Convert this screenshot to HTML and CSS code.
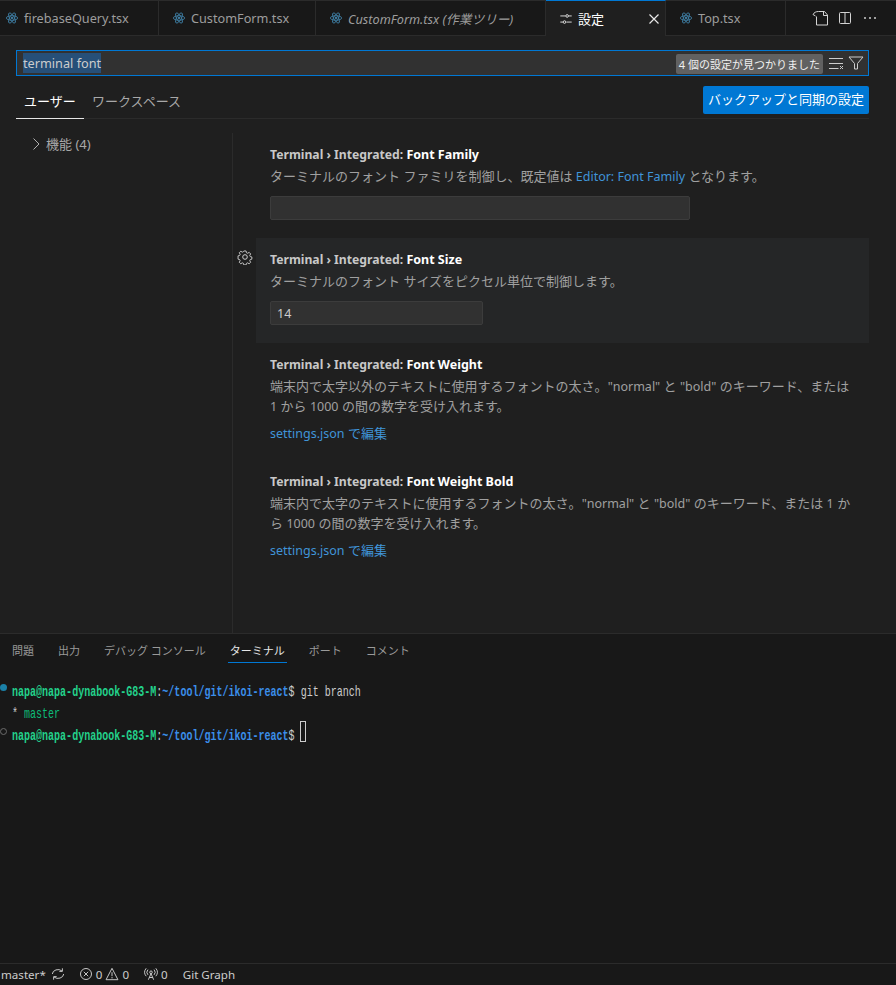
FILE: index.html
```html
<!DOCTYPE html>
<html lang="ja">
<head>
<meta charset="utf-8">
<title>設定</title>
<link rel="stylesheet" href="styles.css">
</head>
<body>
<svg class="defs" width="0" height="0" aria-hidden="true">
  <symbol id="react" viewBox="0 0 16 16">
    <g fill="none" stroke="#3f7fa6" stroke-width="1">
      <ellipse cx="8" cy="8" rx="6.5" ry="2.6"/>
      <ellipse cx="8" cy="8" rx="6.5" ry="2.6" transform="rotate(60 8 8)"/>
      <ellipse cx="8" cy="8" rx="6.5" ry="2.6" transform="rotate(120 8 8)"/>
    </g>
    <circle cx="8" cy="8" r="1.3" fill="#3f7fa6"/>
  </symbol>
</svg>
<div class="app">
  <div class="tabbar">
    <div class="tab w1"><svg class="ficon"><use href="#react"/></svg><span>firebaseQuery.tsx</span></div>
    <div class="tab w2"><svg class="ficon"><use href="#react"/></svg><span>CustomForm.tsx</span></div>
    <div class="tab w3"><svg class="ficon"><use href="#react"/></svg><span class="ital">CustomForm.tsx (作業ツリー)</span></div>
    <div class="tab w4 active">
      <svg class="ficon" viewBox="0 0 16 16" fill="none" stroke="#e0e0e0" stroke-width="1.100"><path d="M1.500 4.500h6M11 4.500h3.500M1.500 11.500h3M8.500 11.500h6"/><circle cx="9.300" cy="4.500" r="1.500"/><circle cx="6.300" cy="11.500" r="1.500"/></svg>
      <span>設定</span>
      <svg class="close" viewBox="0 0 16 16" fill="none" stroke="#e8e8e8" stroke-width="1.200"><path d="M3.500 3.500l9 9M12.500 3.500l-9 9"/></svg>
    </div>
    <div class="tab w5"><svg class="ficon"><use href="#react"/></svg><span>Top.tsx</span></div>
    <div class="tabactions">
      <svg class="act" viewBox="0 0 16 16" fill="none" stroke="#d4d4d4" stroke-width="1"><path d="M4.500 6.500v8.500h11v-10l-3-3.500h-6"/><path d="M11.500 1.500v4h4"/><path d="M1 4.500c1-2 3-3 5.500-3M1 4.500l2.500 1.500"/></svg>
      <svg class="act" viewBox="0 0 16 16" fill="none" stroke="#d4d4d4" stroke-width="1"><rect x="2.500" y="2.500" width="11" height="11" rx="1"/><path d="M8 2.500v11"/></svg>
      <svg class="act" viewBox="0 0 16 16" fill="#cccccc"><circle cx="3" cy="8" r="1"/><circle cx="8" cy="8" r="1"/><circle cx="13" cy="8" r="1"/></svg>
    </div>
  </div>

  <main class="editor">
    <div class="searchbox">
      <span class="query">terminal font</span>
      <span class="count">4 個の設定が見つかりました</span>
      <svg class="sicon" viewBox="0 0 16 16" fill="none" stroke="#cccccc" stroke-width="1"><path d="M1 3.500h14M1 8.500h14M1 13.500h9.500"/><path d="M12 11l3 3M15 11l-3 3"/></svg>
      <svg class="sicon" viewBox="0 0 16 16" fill="none" stroke="#cccccc" stroke-width="1"><path d="M1 2h14l-5.500 6.500v5.500h-3v-5.500z"/></svg>
    </div>
    <div class="scopebar">
      <div class="scope on">ユーザー</div>
      <div class="scope">ワークスペース</div>
      <button class="backup">バックアップと同期の設定</button>
    </div>
    <div class="body">
      <nav class="toc">
        <svg class="chev" viewBox="0 0 16 16" fill="none" stroke="#b0b0b0" stroke-width="1"><path d="M5.500 2.500l5.500 5.500-5.500 5.500"/></svg>
        <span>機能 (4)</span>
      </nav>
      <div class="list">
        <section class="item">
          <h3><span class="cat">Terminal › Integrated: </span>Font Family</h3>
          <p>ターミナルのフォント ファミリを制御し、既定値は <a class="la">Editor: Font Family</a> となります。</p>
          <div class="field wide"></div>
        </section>
        <section class="item hover">
          <svg class="gear" viewBox="0 0 16 16" fill="none" stroke="#cfcfcf" stroke-width="1"><circle cx="8" cy="8" r="2.300"/><path d="M6.800 1.500h2.400l.4 1.900 1.300.6 1.700-1 1.600 1.700-1 1.600.6 1.300 1.700.4v2.400l-1.700.4-.6 1.300 1 1.700-1.700 1.600-1.600-1-1.300.6-.4 1.700H6.800l-.4-1.700-1.300-.6-1.700 1-1.600-1.700 1-1.600-.6-1.300-1.700-.4V6.800l1.700-.4.600-1.300-1-1.700 1.700-1.600 1.600 1 1.300-.6z" transform="translate(.6 .6) scale(.92)"/></svg>
          <h3><span class="cat">Terminal › Integrated: </span>Font Size</h3>
          <p>ターミナルのフォント サイズをピクセル単位で制御します。</p>
          <div class="field narrow">14</div>
        </section>
        <section class="item tall">
          <h3><span class="cat">Terminal › Integrated: </span>Font Weight</h3>
          <p>端末内で太字以外のテキストに使用するフォントの太さ。<span class="la">"normal"</span> と <span class="la">"bold"</span> のキーワード、または<br><span class="la">1</span> から <span class="la">1000</span> の間の数字を受け入れます。</p>
          <a class="edit"><span class="la">settings.json</span> で編集</a>
        </section>
        <section class="item tall">
          <h3><span class="cat">Terminal › Integrated: </span>Font Weight Bold</h3>
          <p>端末内で太字のテキストに使用するフォントの太さ。<span class="la">"normal"</span> と <span class="la">"bold"</span> のキーワード、または <span class="la">1</span> か<br>ら <span class="la">1000</span> の間の数字を受け入れます。</p>
          <a class="edit"><span class="la">settings.json</span> で編集</a>
        </section>
      </div>
    </div>
  </main>

  <section class="panel">
    <div class="ptabs">
      <div class="ptab">問題</div>
      <div class="ptab">出力</div>
      <div class="ptab">デバッグ コンソール</div>
      <div class="ptab on">ターミナル</div>
      <div class="ptab">ポート</div>
      <div class="ptab">コメント</div>
    </div>
    <div class="term">
      <div class="line"><i class="deco blue"></i><div class="mono"><b class="g">napa@napa-dynabook-G83-M</b>:<b class="b">~/tool/git/ikoi-react</b>$ git branch</div></div>
      <div class="line"><div class="mono">* <span class="gm">master</span></div></div>
      <div class="line"><i class="deco hollow"></i><div class="mono"><b class="g">napa@napa-dynabook-G83-M</b>:<b class="b">~/tool/git/ikoi-react</b>$</div><i class="cursor"></i></div>
    </div>
  </section>

  <footer class="status">
    <span class="s1">master*</span>
    <svg class="st s2" viewBox="0 0 16 16" fill="none" stroke="#cccccc" stroke-width="1.100"><path d="M1.500 8a6.500 5.500 0 0 1 11-3.500M14.500 8a6.500 5.500 0 0 1-11 3.500"/><path d="M9.500 5h3.500v-3.500M6.500 11h-3.500v3.500"/></svg>
    <svg class="st s3" viewBox="0 0 16 16" fill="none" stroke="#cccccc" stroke-width="1.100"><circle cx="8" cy="8" r="6.300"/><path d="M5.500 5.500l5 5M10.500 5.500l-5 5"/></svg><span>0</span>
    <svg class="st" viewBox="0 0 16 16" fill="none" stroke="#cccccc" stroke-width="1.100"><path d="M8 1.500l6.800 13h-13.600z"/><path d="M8 6v4.500M8 11.500v1.500"/></svg><span>0</span>
    <svg class="st s4" viewBox="0 0 16 16" fill="none" stroke="#cccccc" stroke-width="1.100"><circle cx="8" cy="6" r="1.500"/><path d="M8 7.500l-3 7M8 7.500l3 7M6 12h4M4.500 3a4.500 4.500 0 0 0 0 6M11.500 3a4.500 4.500 0 0 1 0 6M2.500 1.500a7 7 0 0 0 0 9M13.500 1.500a7 7 0 0 1 0 9"/></svg><span>0</span>
    <span class="s5">Git Graph</span>
  </footer>
</div>
</body>
</html>
```
FILE: styles.css
```css
* { box-sizing: border-box; }
html, body { margin: 0; height: 100%; }
body {
  background: #1f1f1f;
  color: #cccccc;
  font-family: "Noto Sans", "Noto Sans CJK JP", sans-serif;
  font-size: 13px;
  overflow: hidden;
}
.defs { position: absolute; }
.app { width: 896px; height: 985px; display: flex; flex-direction: column; }

.tabbar {
  height: 36px;
  flex: none;
  display: flex;
  background: #181818;
  border-top: 1px solid #2b2b2b;
  border-bottom: 1px solid #2b2b2b;
}
.tab {
  display: flex;
  align-items: center;
  padding-left: 5px;
  gap: 5px;
  color: #9d9d9d;
  border-right: 1px solid #2b2b2b;
  font-size: 12.700px;
}
.w1 { width: 159px; }
.w2 { width: 157px; padding-left: 13px; }
.w3 { width: 230px; padding-left: 13px; }
.w4 { width: 120px; padding-left: 13px; }
.w5 { width: 120px; padding-left: 13px; }
.ficon { width: 14px; height: 14px; flex: none; }
.ital { font-style: italic; }
.tab.active {
  background: #1f1f1f;
  color: #ffffff;
  font-size: 13px;
  position: relative;
  margin-bottom: -1px;
  border-top: 1px solid #0078d4;
  margin-top: -1px;
  height: 36px;
}
.close { width: 16px; height: 16px; margin-left: auto; margin-right: 3px; }
.tabactions { flex: 1; display: flex; align-items: center; justify-content: flex-end; gap: 9px; padding-right: 18px; }
.act { width: 16px; height: 16px; }

.editor { flex: none; height: 597px; display: flex; flex-direction: column; padding: 14px 27px 0 16px; }
.searchbox {
  height: 26px;
  flex: none;
  display: flex;
  align-items: center;
  background: #313131;
  border: 1px solid #0078d4;
  padding: 0 6px;
  font-size: 12.700px;
}
.query { background: #264f78; color: #cccccc; line-height: 20px; }
.count {
  margin-left: auto;
  margin-top: 2px;
  height: 20px;
  background: #616161;
  color: #f0f0f0;
  font-size: 11px;
  line-height: 22px;
  padding: 0 3px;
  border-radius: 2px;
  margin-right: 3px;
}
.sicon { width: 16px; height: 16px; margin-left: 2px; }
.sicon + .sicon { margin-left: 4px; margin-right: -2px; }

.scopebar {
  height: 43px;
  flex: none;
  display: flex;
  align-items: flex-end;
  border-bottom: 1px solid #2b2b2b;
  position: relative;
}
.scope { height: 32px; line-height: 31px; padding: 0 8px; color: #a8a8a8; font-size: 13px; }
.scope.on { color: #ffffff; width: 68px; border-bottom: 1px solid #e7e7e7; margin-bottom: -1px; height: 33px; }
.backup {
  margin-left: auto;
  align-self: flex-start;
  margin-top: 10px;
  width: 166px;
  height: 28px;
  border: 0;
  border-radius: 2px;
  background: #0078d4;
  color: #ffffff;
  padding: 0 0 3px;
  font: 13px "Noto Sans", "Noto Sans CJK JP", sans-serif;
}

.body { flex: 1; display: flex; min-height: 0; padding-top: 14px; }
.toc { width: 216px; flex: none; display: flex; align-items: flex-start; padding-left: 12px; color: #a8a8a8; font-size: 13px; height: 24px; gap: 2px; line-height: 22px; }
.chev { width: 16px; height: 16px; margin-top: 3px; }
.list { flex: 1; border-left: 1px solid #2b2b2b; padding-left: 23px; }
.item { padding: 9px 14px 0; position: relative; height: 105px; }
.tall { height: 117px; }
.hover { background: #252627; }
.gear { position: absolute; left: -19px; top: 11px; width: 16px; height: 16px; }
h3 { margin: 4px 0 0; font-size: 12.500px; line-height: 18px; color: #ffffff; font-weight: 700; }
.cat { color: #c8c8c8; font-size: 12.200px; }
p { margin: 2px 0 0; line-height: 20px; font-size: 13px; color: #a0a0a0; white-space: nowrap; }
.la { font-size: 12.500px; line-height: 1; }
a { color: #4094d8; }
.field { height: 24px; margin-top: 10px; background: #313131; border: 1px solid #3c3c3c; border-radius: 2px; font-size: 12.500px; line-height: 23px; padding-left: 7px; }
.wide { width: 420px; }
.narrow { width: 213px; padding-left: 6px; }
.edit { display: block; margin-top: 6px; line-height: 22px; font-size: 13px; }

.panel { flex: 1; min-height: 0; border-top: 1px solid #2b2b2b; background: #181818; }
.ptabs { display: flex; height: 36px; padding: 8px 0 0 12px; gap: 24px; font-size: 11px; color: #9a9a9a; }
.ptab { height: 21px; line-height: 18px; }
.ptab.on { color: #e7e7e7; border-bottom: 1px solid #0078d4; padding: 0 2px; margin: 0 -2px; }
.term { padding-top: 11px; }
.line { height: 22px; position: relative; padding-left: 12px; }
.mono {
  font-family: "Liberation Mono", monospace;
  font-size: 15px;
  line-height: 24px;
  color: #cccccc;
  width: 150%;
  transform: scaleX(.668);
  transform-origin: left center;
  white-space: pre;
}
.g { color: #23d18b; }
.b { color: #3b8eea; }
.gm { color: #0dbc79; }
.deco { position: absolute; left: 0; top: 3px; width: 7px; height: 7px; border-radius: 50%; }
.blue { background: #1b81a8; }
.hollow { border: 1px solid #6b6b6b; }
.cursor { position: absolute; left: 300px; top: -4px; width: 6px; height: 21px; border: 1px solid #cccccc; }

.status {
  height: 22px;
  flex: none;
  display: flex;
  align-items: center;
  background: #181818;
  border-top: 1px solid #2b2b2b;
  font-size: 11.600px;
  color: #cccccc;
  gap: 3px;
  padding: 0 0 1px 1px;
}
.st { width: 14px; height: 14px; flex: none; }
.s2 { margin-left: 2px; }
.s3 { margin-left: 11px; }
.s4 { margin-left: 12px; }
.s5 { margin-left: 12px; }
```
